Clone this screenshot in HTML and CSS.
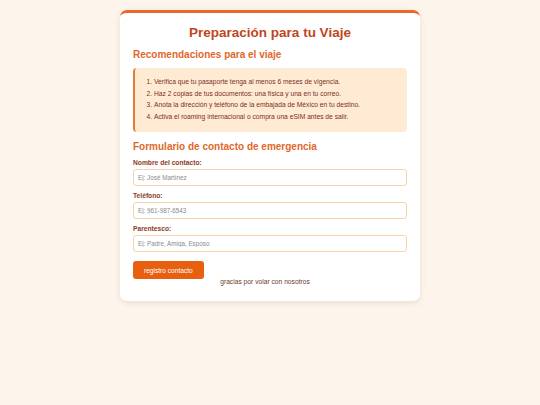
FILE: index.html
```html
<!DOCTYPE html>
<html lang="es">
<head>
    <meta charset="UTF-8">
    <title>Preparación para tu Viaje</title>
    <link rel="stylesheet" href="styles.css">
</head>
<body>
    <div class="card">
        <h1>Preparación para tu Viaje</h1>

        <h2>Recomendaciones para el viaje</h2>
        <div class="tips">
            <ol>
                <li>Verifica que tu pasaporte tenga al menos 6 meses de vigencia.</li>
                <li>Haz 2 copias de tus documentos: una física y una en tu correo.</li>
                <li>Anota la dirección y teléfono de la embajada de México en tu destino.</li>
                <li>Activa el roaming internacional o compra una eSIM antes de salir.</li>
            </ol>
        </div>

        <h2 class="form-title">Formulario de contacto de emergencia</h2>
        <form id="contacto">
            <label for="nombre">Nombre del contacto:</label>
            <input type="text" id="nombre" placeholder="Ej: José Martínez">

            <label for="telefono">Teléfono:</label>
            <input type="tel" id="telefono" placeholder="Ej: 961-987-6543">

            <label for="parentesco">Parentesco:</label>
            <input type="text" id="parentesco" placeholder="Ej: Padre, Amiga, Esposo">

            <button type="submit">registro contacto</button>
        </form>

        <p class="footer">gracias por volar con nosotros</p>
    </div>
</body>
</html>
```

FILE: styles.css
```css
body {
    font-family: "Liberation Sans", Arial, sans-serif;
    background: #fdf5ec;
    margin: 0;
    padding: 10px 0;
}
.card {
    width: 274px;
    margin: 0 auto;
    padding: 0 13px 15px;
    background: white;
    border-top: 3px solid #e8692c;
    border-radius: 7px;
    box-shadow: 0 2px 6px rgba(150, 90, 40, 0.15);
}
h1 {
    font-size: 13.5px;
    line-height: 16px;
    text-align: center;
    color: #c0461d;
    margin: 0;
    padding: 12px 0 8px;
}
h2 {
    font-size: 10px;
    line-height: 12px;
    color: #e0682a;
    margin: 0 0 7px;
}
h2.form-title {
    margin-bottom: 6px;
}
.tips {
    background: #ffebd4;
    border-left: 2px solid #e07b39;
    border-radius: 4px;
    padding: 8px 10px 10px 8px;
    margin-bottom: 9px;
}
.tips ol {
    margin: 0;
    padding-left: 11px;
    font-size: 6.7px;
    line-height: 11.5px;
    color: #7b2e1b;
}
form label {
    display: block;
    font-size: 6.7px;
    font-weight: bold;
    line-height: 8px;
    color: #8b3a1e;
    margin: 5px 0 2px;
}
form input {
    display: block;
    box-sizing: border-box;
    width: 100%;
    height: 17px;
    padding: 0 4px;
    margin-bottom: 6px;
    border: 1px solid #f6d3ab;
    border-radius: 3px;
    font-family: inherit;
    font-size: 6.3px;
    color: #555;
}
form input::placeholder {
    color: #8a8a8a;
}
form button {
    display: block;
    margin-top: 9px;
    height: 18px;
    padding: 0 11px;
    border: none;
    border-radius: 3px;
    background: #e85f10;
    color: white;
    font-family: inherit;
    font-size: 6.6px;
    cursor: pointer;
}
.footer {
    margin: -1px 0 0;
    padding-right: 10px;
    text-align: center;
    font-size: 6.7px;
    line-height: 8px;
    color: #6d3a2a;
}
```
